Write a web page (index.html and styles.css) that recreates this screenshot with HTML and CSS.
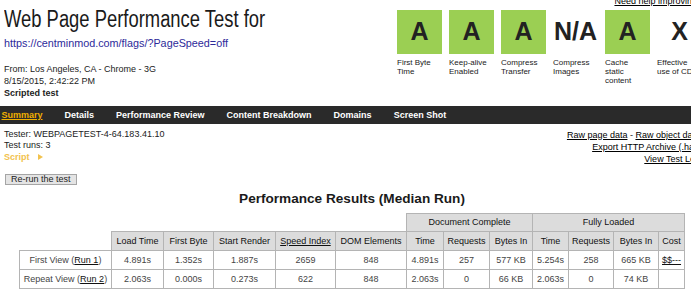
FILE: index.html
```html
<!DOCTYPE html>
<html lang="en">
<head>
  <meta charset="UTF-8">
  <title>WebPagetest Test Result</title>
  <link rel="stylesheet" href="styles.css">
</head>
<body>
  <div class="page">
    <div class="header">
      <div class="test-info">
        <h1>Web Page Performance Test for</h1>
        <a class="test-url" href="#">https://centminmod.com/flags/?PageSpeed=off</a>
        <div class="test-meta">
          <p>From: Los Angeles, CA - Chrome - 3G</p>
          <p>8/15/2015, 2:42:22 PM</p>
          <p class="scripted">Scripted test</p>
        </div>
      </div>

      <div class="grades-wrap">
        <a class="help-link" href="#">Need help improving?</a>
        <ul class="grades">
          <li><div class="grade grade-a">A</div><span class="grade-label">First Byte Time</span></li>
          <li><div class="grade grade-a">A</div><span class="grade-label">Keep-alive Enabled</span></li>
          <li><div class="grade grade-a">A</div><span class="grade-label">Compress Transfer</span></li>
          <li><div class="grade">N/A</div><span class="grade-label">Compress Images</span></li>
          <li><div class="grade grade-a">A</div><span class="grade-label">Cache static content</span></li>
          <li><div class="grade">X</div><span class="grade-label">Effective use of CDN</span></li>
        </ul>
      </div>
    </div>

    <div class="tabs">
      <a class="current" href="#">Summary</a>
      <a href="#">Details</a>
      <a href="#">Performance Review</a>
      <a href="#">Content Breakdown</a>
      <a href="#">Domains</a>
      <a href="#">Screen Shot</a>
    </div>

    <div class="info-row">
      <div class="test-details">
        <div>Tester: WEBPAGETEST-4-64.183.41.10</div>
        <div>Test runs: 3</div>
        <div class="script-toggle">Script <span class="arrow"></span></div>
        <button class="rerun">Re-run the test</button>
      </div>
      <div class="raw-links">
        <div><a href="#">Raw page data</a> - <a href="#">Raw object data</a></div>
        <div><a href="#">Export HTTP Archive (.har)</a></div>
        <div><a href="#">View Test Log</a></div>
      </div>
    </div>

    <div class="results">
      <h2>Performance Results (Median Run)</h2>
      <table>
        <colgroup>
          <col style="width:92px"><col style="width:52px"><col style="width:50px"><col style="width:62px">
          <col style="width:60px"><col style="width:71px"><col style="width:37px"><col style="width:46px">
          <col style="width:43px"><col style="width:36px"><col style="width:45px"><col style="width:45px">
          <col style="width:26px">
        </colgroup>
        <tr class="group-row">
          <th class="blank" colspan="6"></th>
          <th colspan="3">Document Complete</th>
          <th colspan="4">Fully Loaded</th>
        </tr>
        <tr>
          <th class="blank"></th>
          <th>Load Time</th>
          <th>First Byte</th>
          <th>Start Render</th>
          <th><a href="#">Speed Index</a></th>
          <th>DOM Elements</th>
          <th>Time</th>
          <th>Requests</th>
          <th>Bytes In</th>
          <th>Time</th>
          <th>Requests</th>
          <th>Bytes In</th>
          <th>Cost</th>
        </tr>
        <tr>
          <td class="run-label">First View (<a href="#">Run 1</a>)</td>
          <td>4.891s</td>
          <td>1.352s</td>
          <td>1.887s</td>
          <td>2659</td>
          <td>848</td>
          <td>4.891s</td>
          <td>257</td>
          <td>577 KB</td>
          <td>5.254s</td>
          <td>258</td>
          <td>665 KB</td>
          <td><a href="#">$$---</a></td>
        </tr>
        <tr>
          <td class="run-label">Repeat View (<a href="#">Run 2</a>)</td>
          <td>2.063s</td>
          <td>0.000s</td>
          <td>0.273s</td>
          <td>622</td>
          <td>848</td>
          <td>2.063s</td>
          <td>0</td>
          <td>66 KB</td>
          <td>2.063s</td>
          <td>0</td>
          <td>74 KB</td>
          <td></td>
        </tr>
      </table>
    </div>
  </div>
</body>
</html>
```

FILE: styles.css
```css
html, body {
  margin: 0;
  overflow: hidden;
  background: #ffffff;
}

body {
  font-family: "Liberation Sans", Arial, sans-serif;
  font-size: 9px;
  color: #222222;
}

.page {
  width: 704px;
}

/* header: title + grades */
.header {
  display: flex;
  align-items: flex-start;
  padding: 0 2px 0 4px;
}

.test-info {
  width: 394px;
}

/* the original heading uses a condensed face */
h1 {
  margin: 6px 0 0;
  font-size: 23px;
  font-weight: normal;
  line-height: 26px;
  color: #1a1a1a;
  white-space: nowrap;
  transform: scaleX(0.8);
  transform-origin: left center;
}

.test-url {
  display: block;
  margin-top: 4px;
  font-size: 10.8px;
  line-height: 14px;
  color: #2d2a9a;
  text-decoration: none;
}

.test-meta {
  margin-top: 12.5px;
  line-height: 12px;
}

.test-meta p {
  margin: 0;
}

.scripted {
  font-weight: bold;
}

.grades-wrap {
  display: flex;
  flex-direction: column;
}

.help-link {
  align-self: flex-end;
  margin-top: -4.5px;
  line-height: 10px;
  color: #000000;
}

.grades {
  display: flex;
  gap: 7px;
  margin: 4.5px 0 0;
  padding: 0;
  list-style: none;
}

.grades li {
  width: 45px;
}

.grade {
  height: 42px;
  padding-bottom: 2px;
  line-height: 42px;
  text-align: center;
  font-size: 25px;
  font-weight: bold;
  color: #222222;
}

.grade-a {
  background: #9bcf53;
}

.grade-label {
  display: block;
  width: 43px;
  margin-top: 4px;
  font-size: 8px;
  line-height: 9px;
}

/* tab bar */
.tabs {
  display: flex;
  gap: 22px;
  height: 18px;
  margin-top: 7px;
  padding-left: 1.5px;
  background: #2a2a2a;
}

.tabs a {
  color: #ffffff;
  font-weight: bold;
  line-height: 18px;
  text-decoration: none;
}

.tabs a.current {
  color: #f0b000;
  text-decoration: underline;
}

/* tester info + raw links */
.info-row {
  display: flex;
  justify-content: space-between;
  margin-top: 5px;
  padding: 0 4px;
}

.test-details {
  line-height: 11.5px;
}

.script-toggle {
  color: #f2c24e;
  font-weight: bold;
}

.arrow {
  display: inline-block;
  margin-left: 6px;
  border-left: 5px solid #f2c24e;
  border-top: 3px solid transparent;
  border-bottom: 3px solid transparent;
}

.rerun {
  display: block;
  height: 11px;
  margin: 10.5px 0 0 1px;
  padding: 0 5px;
  border: 1px solid #a5a5a5;
  border-radius: 0;
  background: #e4e4e4;
  font-family: inherit;
  font-size: 9px;
  line-height: 9px;
  color: #222222;
}

.raw-links {
  text-align: right;
  line-height: 12px;
}

.raw-links a {
  color: #000000;
}

/* results table */
.results {
  padding: 0 4px;
  text-align: center;
}

h2 {
  margin: 6.5px 0 5.5px;
  font-size: 13.6px;
  line-height: 16px;
  color: #1a1a1a;
}

table {
  width: 666px;
  margin: 0 auto;
  border-collapse: collapse;
  table-layout: fixed;
}

th, td {
  padding: 0;
  border: 1px solid #b4b4b4;
  line-height: 18px;
  font-size: 9px;
  text-align: center;
  white-space: nowrap;
}

th {
  background: #dcdcdc;
  font-weight: normal;
  color: #111111;
}

.group-row th {
  line-height: 17px;
}

th.blank {
  border: none;
  background: none;
}

td {
  color: #444444;
}

th a, td a {
  color: #111111;
}
```
